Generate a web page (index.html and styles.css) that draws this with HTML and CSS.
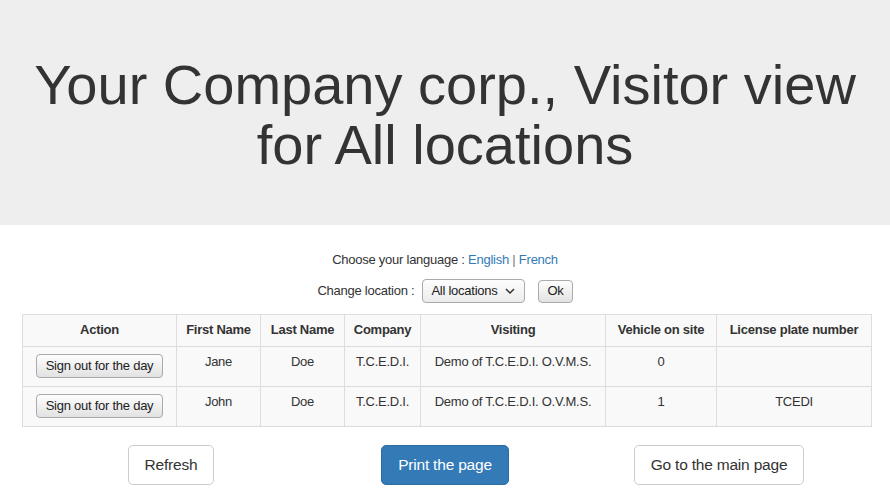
FILE: index.html
```html
<!DOCTYPE html>
<html lang="en">
<head>
    <meta charset="UTF-8">
    <meta name="viewport" content="width=device-width, initial-scale=1.0">
    <title>Visitor view</title>
    <link rel="stylesheet" href="styles.css">
</head>
<body>
    <div class="jumbotron">
        <h1>Your Company corp., Visitor view<br>for All locations</h1>
    </div>

    <div class="language">
        Choose your language : <a href="#">English</a> <span class="sep">|</span> <a href="#">French</a>
    </div>

    <form class="location">
        <label for="loc">Change location :</label>
        <span class="select-wrap">
            <select id="loc">
                <option>All locations</option>
            </select>
            <svg class="chevron" width="10" height="6" viewBox="0 0 10 6"><path d="M1 1l4 4 4-4" fill="none" stroke="#333" stroke-width="1.5"/></svg>
        </span>
        <button type="button" class="btn-native">Ok</button>
    </form>

    <table class="visitors">
        <colgroup>
            <col style="width:154px">
            <col style="width:84px">
            <col style="width:84px">
            <col style="width:76px">
            <col style="width:185px">
            <col style="width:111px">
            <col style="width:155px">
        </colgroup>
        <thead>
            <tr>
                <th>Action</th>
                <th>First Name</th>
                <th>Last Name</th>
                <th>Company</th>
                <th>Visiting</th>
                <th>Vehicle on site</th>
                <th>License plate number</th>
            </tr>
        </thead>
        <tbody>
            <tr>
                <td class="action"><button type="button" class="btn-native">Sign out for the day</button></td>
                <td>Jane</td>
                <td>Doe</td>
                <td>T.C.E.D.I.</td>
                <td>Demo of T.C.E.D.I. O.V.M.S.</td>
                <td>0</td>
                <td></td>
            </tr>
            <tr>
                <td class="action"><button type="button" class="btn-native">Sign out for the day</button></td>
                <td>John</td>
                <td>Doe</td>
                <td>T.C.E.D.I.</td>
                <td>Demo of T.C.E.D.I. O.V.M.S.</td>
                <td>1</td>
                <td>TCEDI</td>
            </tr>
        </tbody>
    </table>

    <div class="actions">
        <div class="cell"><button type="button" class="btn btn-default">Refresh</button></div>
        <div class="cell"><button type="button" class="btn btn-primary">Print the page</button></div>
        <div class="cell"><button type="button" class="btn btn-default">Go to the main page</button></div>
    </div>
</body>
</html>
```

FILE: styles.css
```css
/* Base */
body {
    margin: 0;
    font-family: "Liberation Sans", Arial, sans-serif;
    font-size: 13px;
    line-height: 20px;
    letter-spacing: -0.25px;
    color: #333;
    background: #fff;
}

a {
    color: #337ab7;
    text-decoration: none;
}

/* Header */
.jumbotron {
    background: #eee;
    height: 225px;
    box-sizing: border-box;
    padding-top: 55px;
    text-align: center;
}

.jumbotron h1 {
    margin: 0;
    font-size: 56px;
    font-weight: normal;
    line-height: 60px;
    letter-spacing: 0;
}

/* Language / location */
.language {
    margin-top: 25px;
    text-align: center;
}

.sep {
    color: #777;
}

.location {
    margin: 9px 0 0;
    height: 24px;
    display: flex;
    justify-content: center;
    align-items: center;
}

.location label {
    margin-right: 8px;
}

.select-wrap {
    position: relative;
    display: inline-block;
    margin-right: 13px;
}

.select-wrap select {
    -webkit-appearance: none;
    appearance: none;
    width: 103px;
    height: 24px;
    padding: 0 0 0 8px;
    border: 1px solid #aaa;
    border-radius: 4px;
    background: linear-gradient(#fdfdfd, #ececec);
    font: inherit;
    letter-spacing: -0.25px;
    color: #222;
}

.chevron {
    position: absolute;
    right: 10px;
    top: 9px;
    pointer-events: none;
}

.btn-native {
    height: 24px;
    padding: 0 9px;
    border: 1px solid #aaa;
    border-radius: 4px;
    background: linear-gradient(#fefefe, #e2e2e2);
    font: inherit;
    letter-spacing: -0.25px;
    color: #222;
}

.location .btn-native {
    height: 23px;
    padding: 0 8px;
}

/* Table */
.visitors {
    margin: 11px 0 0 22px;
    width: 849px;
    table-layout: fixed;
    border-collapse: collapse;
    background: #f9f9f9;
}

.visitors th,
.visitors td {
    border: 1px solid #ddd;
    text-align: center;
    vertical-align: top;
}

.visitors th {
    padding: 5px 4px 6px;
    font-weight: bold;
}

.visitors td {
    padding: 5px 4px 14px;
}

.visitors td.action {
    padding: 7px 4px 8px;
    line-height: 0;
}

.visitors td.action .btn-native {
    line-height: 20px;
}

/* Bottom buttons */
.actions {
    display: flex;
    padding: 0 34px;
    margin-top: 18px;
}

.actions .cell {
    flex: 1;
    text-align: center;
}

.btn {
    padding: 9px 16px;
    font-family: inherit;
    font-size: 15.5px;
    line-height: 20px;
    letter-spacing: -0.2px;
    border: 1px solid #ccc;
    border-radius: 5px;
    cursor: pointer;
}

.btn-default {
    background: #fff;
    color: #333;
}

.btn-primary {
    background: #337ab7;
    border-color: #2e6da4;
    color: #fff;
}
```
